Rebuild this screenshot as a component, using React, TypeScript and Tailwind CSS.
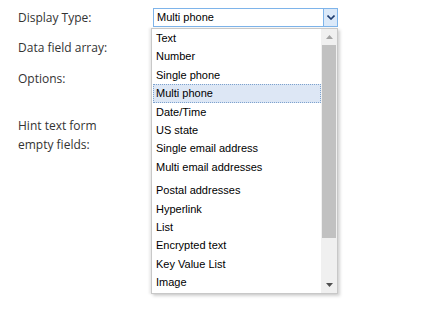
import React from 'react';

const options = [
  'Text',
  'Number',
  'Single phone',
  'Multi phone',
  'Date/Time',
  'US state',
  'Single email address',
  'Multi email addresses',
  null,
  'Postal addresses',
  'Hyperlink',
  'List',
  'Encrypted text',
  'Key Value List',
  'Image',
];

const selected = 'Multi phone';

const App: React.FC = () => {
  return (
    <div className="relative w-[441px] h-[313px] bg-white text-[12px] text-[#333] font-['Open_Sans','Liberation_Sans',sans-serif]">
      <div className="flex pl-[18px] pt-[8px]">
        <div className="w-[135px] flex flex-col">
          <div className="h-[19px] leading-[19px]">Display Type:</div>
          <div className="h-[18px] leading-[18px] mt-[12px]">Data field array:</div>
          <div className="h-[18px] leading-[18px] mt-[13px]">Options:</div>
          <div className="leading-[18.5px] mt-[29px]">
            Hint text form
            <br />
            empty fields:
          </div>
        </div>
        <div className="flex flex-col font-['Liberation_Sans',Arial,sans-serif] text-[11px]">
          <div className="w-[185px] h-[19px] border border-[#7eb4ea] flex items-center bg-white">
            <span className="flex-1 pl-[3px] text-black leading-none">{selected}</span>
            <span className="w-[14px] h-full bg-[#dbe9f9] border-l border-[#7eb4ea] flex items-center justify-center">
              <svg width="8" height="5" viewBox="0 0 8 5">
                <path d="M0.5 0.5 L4 4 L7.5 0.5" stroke="#1f3d70" strokeWidth="1.6" fill="none" />
              </svg>
            </span>
          </div>
          <div className="w-[185px] h-[20px] mt-[89px] border border-[#a8adbf]" />
        </div>
      </div>

      {/* open dropdown */}
      <div className="absolute left-[151px] top-[28px] w-[187px] h-[266px] bg-white border border-[#c8c8c8] shadow-[2px_2px_3px_rgba(0,0,0,0.18),-2px_0_2px_rgba(0,0,0,0.08)] flex font-['Liberation_Sans',Arial,sans-serif] text-[11px]">
        <div className="flex-1 flex flex-col pl-[1px] text-black">
          {options.map((o, i) =>
            o === null ? (
              <div key={i} className="h-[5px]" />
            ) : (
              <div
                key={o}
                className={
                  'h-[18.4px] leading-[18.4px] pl-[3px] whitespace-nowrap ' +
                  (o === selected ? 'bg-[#dde7f5] outline-1 outline-dotted outline-[#7da2ce] -outline-offset-1' : '')
                }
              >
                {o}
              </div>
            )
          )}
        </div>
        <div className="w-[16px] bg-[#f0f0f0] flex flex-col items-center">
          <div className="h-[16px] flex items-center justify-center">
            <svg width="7" height="4" viewBox="0 0 7 4">
              <path d="M3.5 0 L7 4 L0 4 Z" fill="#a3a3a3" />
            </svg>
          </div>
          <div className="w-[14px] h-[193px] bg-[#c1c1c1]" />
          <div className="flex-1" />
          <div className="h-[16px] flex items-center justify-center">
            <svg width="7" height="4" viewBox="0 0 7 4">
              <path d="M0 0 L7 0 L3.5 4 Z" fill="#505050" />
            </svg>
          </div>
        </div>
      </div>
    </div>
  );
};

export default App;
